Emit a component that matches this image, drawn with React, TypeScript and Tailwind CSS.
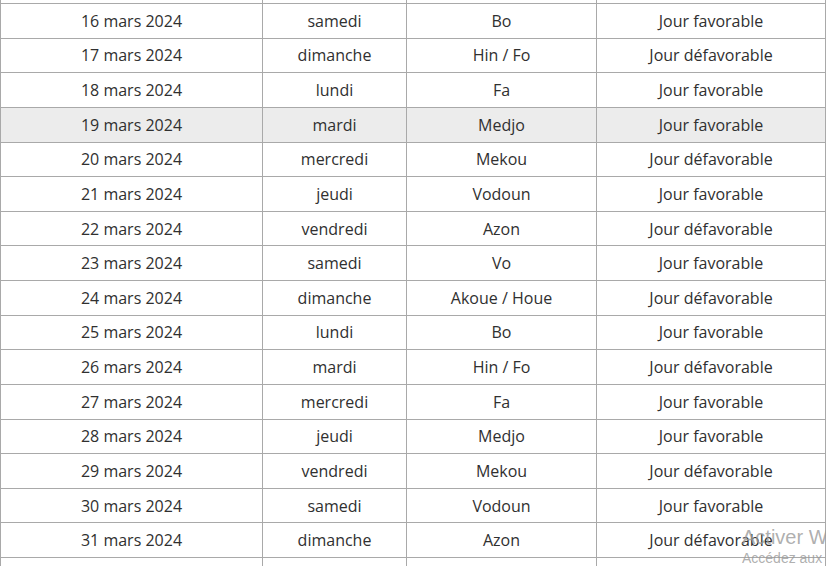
import React from 'react'

type Row = {
  date: string
  day: string
  sign: string
  good: boolean
}

const rows: Row[] = [
  { date: '16 mars 2024', day: 'samedi', sign: 'Bo', good: true },
  { date: '17 mars 2024', day: 'dimanche', sign: 'Hin / Fo', good: false },
  { date: '18 mars 2024', day: 'lundi', sign: 'Fa', good: true },
  { date: '19 mars 2024', day: 'mardi', sign: 'Medjo', good: true },
  { date: '20 mars 2024', day: 'mercredi', sign: 'Mekou', good: false },
  { date: '21 mars 2024', day: 'jeudi', sign: 'Vodoun', good: true },
  { date: '22 mars 2024', day: 'vendredi', sign: 'Azon', good: false },
  { date: '23 mars 2024', day: 'samedi', sign: 'Vo', good: true },
  { date: '24 mars 2024', day: 'dimanche', sign: 'Akoue / Houe', good: false },
  { date: '25 mars 2024', day: 'lundi', sign: 'Bo', good: true },
  { date: '26 mars 2024', day: 'mardi', sign: 'Hin / Fo', good: false },
  { date: '27 mars 2024', day: 'mercredi', sign: 'Fa', good: true },
  { date: '28 mars 2024', day: 'jeudi', sign: 'Medjo', good: true },
  { date: '29 mars 2024', day: 'vendredi', sign: 'Mekou', good: false },
  { date: '30 mars 2024', day: 'samedi', sign: 'Vodoun', good: true },
  { date: '31 mars 2024', day: 'dimanche', sign: 'Azon', good: false },
]

const cell = 'border border-[#a9a9a9] p-0 text-center leading-[22px]'

// rows scrolled half out of view above and below
function EmptyRow() {
  return (
    <tr className="h-[34.625px]">
      <td className={cell}></td>
      <td className={cell}></td>
      <td className={cell}></td>
      <td className={cell}></td>
    </tr>
  )
}

export default function App() {
  return (
    <div className="relative h-[566px] w-[826px] overflow-hidden bg-white font-['Open_Sans',sans-serif] text-[16px] text-[#303030]">
      <table className="mt-[-31.625px] w-[825px] table-fixed border-collapse">
        <colgroup>
          <col className="w-[262px]" />
          <col className="w-[144px]" />
          <col className="w-[190px]" />
          <col className="w-[229px]" />
        </colgroup>
        <tbody>
          <EmptyRow />
          {rows.map((r) => (
            <tr
              key={r.date}
              className={`h-[34.625px] ${r.date === '19 mars 2024' ? 'bg-[#ececec]' : ''}`}
            >
              <td className={cell}>{r.date}</td>
              <td className={cell}>{r.day}</td>
              <td className={cell}>{r.sign}</td>
              <td className={cell}>{r.good ? 'Jour favorable' : 'Jour défavorable'}</td>
            </tr>
          ))}
          <EmptyRow />
        </tbody>
      </table>

      {/* windows activation watermark */}
      <div className="pointer-events-none absolute left-[742px] top-[525px] whitespace-nowrap font-['Liberation_Sans',sans-serif] text-[#9a9a9a]/80">
        <div className="text-[20px] leading-[24px]">Activer Windows</div>
        <div className="text-[14px] leading-[18px]">Accédez aux paramètres</div>
      </div>
    </div>
  )
}
